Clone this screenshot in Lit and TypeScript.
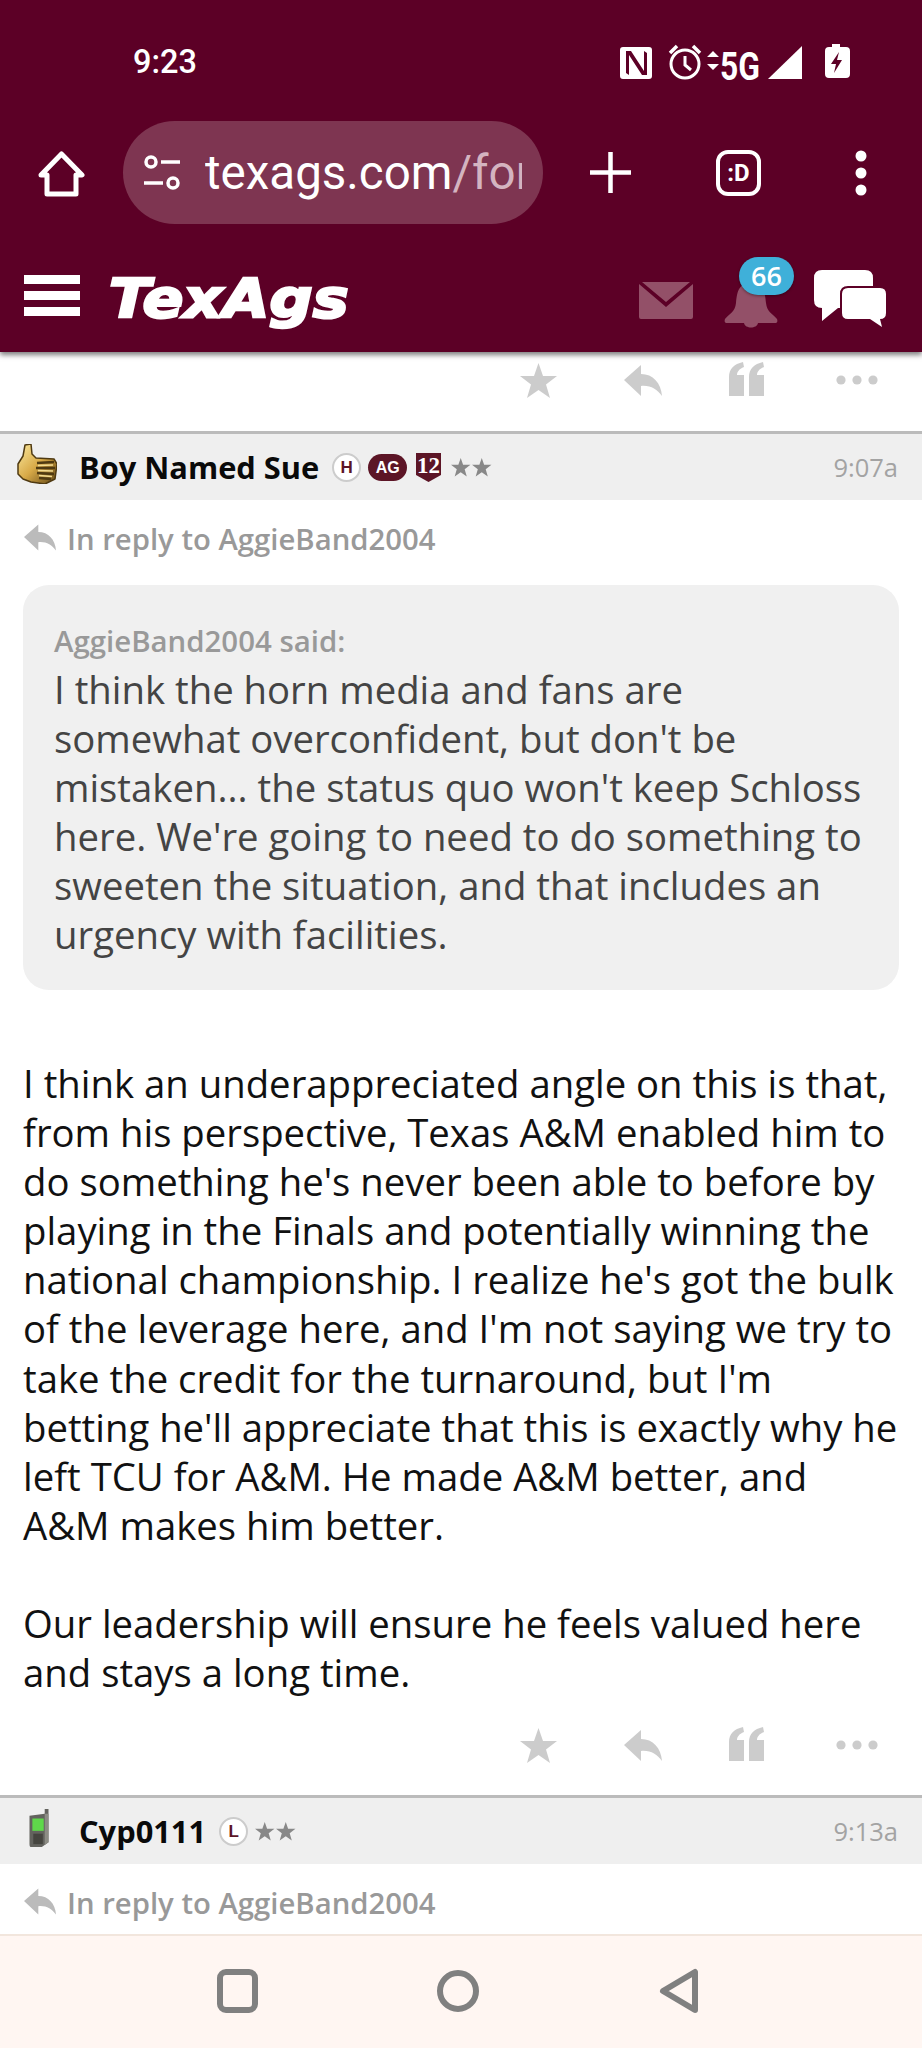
import { LitElement, html, css, svg } from "lit";
import { customElement } from "lit/decorators.js";

const star = svg`<polygon points="18.5,0 23,13 37,13 26,21.5 30,35 18.5,27 7,35 11,21.5 0,13 14,13"/>`;
const replyPath = svg`<path d="M17 0 L0 15 L17 31 L17 21 C26 20 33 24 38 31 C37 18 29 9 17 9 Z"/>`;

function actions() {
  return html`<div class="actions">
    <svg class="a-star" viewBox="0 0 37 35">${star}</svg>
    <svg class="a-reply" viewBox="0 0 38 31">${replyPath}</svg>
    <svg class="a-quote" viewBox="0 0 35 34"><path d="M0 34 V15 C0 7 5 2 14 0 L15 5 C10 7 8 10 8 13 H15 V34 Z M20 34 V15 C20 7 25 2 34 0 L35 5 C30 7 28 10 28 13 H35 V34 Z"/></svg>
    <svg class="a-dots" viewBox="0 0 42 10"><circle cx="5" cy="5" r="4.6"/><circle cx="21" cy="5" r="4.6"/><circle cx="37" cy="5" r="4.6"/></svg>
  </div>`;
}

function replyRow() {
  return html`<div class="reply-row">
    <svg viewBox="0 0 38 31">${replyPath}</svg><span>In reply to AggieBand2004</span>
  </div>`;
}

const stars = html`<svg class="stars" viewBox="0 0 39 18"><g transform="scale(.5)">${star}</g><g transform="translate(20 0) scale(.5)">${star}</g></svg>`;

const thumb = html`<svg class="av-thumb" viewBox="0 0 40 40">
  <defs>
    <linearGradient id="g" x1="0" y1="0" x2="1" y2="1"><stop offset="0" stop-color="#fbeaa0"/><stop offset=".5" stop-color="#d8aa48"/><stop offset="1" stop-color="#5e4312"/></linearGradient>
  </defs>
  <path d="M8 1 L14 0 L15 10 L19 14 L37 15 L40 20 L38 35 L28 40 L14 38 L6 35 L1 30 L1 20 L6 12 Z" fill="url(#g)" stroke="#4f3a12" stroke-width="1.5" stroke-linejoin="round"/>
  <path d="M20 19 L37 18 M19 24 L38 24 M20 29 L37 30 M22 34 L34 35" stroke="#4f3a12" stroke-width="2.6" fill="none"/>
  <path d="M21 21.5 L36 21 M21 26.5 L36 27 M22 31.5 L35 32.5" stroke="#f3dc92" stroke-width="1.5" fill="none"/>
</svg>`;

const phone = html`<svg class="av-phone" viewBox="0 0 22 40">
  <path d="M1 7 L17 5 V0 H21 V35 L14 40 H3 Q1 40 1 37 Z" fill="#63635e"/>
  <rect x="4" y="10" width="12" height="13" fill="#5fd84a"/>
  <rect x="5" y="26" width="10" height="11" fill="#45453f"/>
  <path d="M17 5 H21 V35 L17 38 Z" fill="#8c8c84"/>
</svg>`;

@customElement("app-root")
export class AppRoot extends LitElement {
  static styles = css`
    :host {
      display: flex;
      flex-direction: column;
      width: 922px;
      height: 2048px;
      overflow: hidden;
      background: #fff;
      font-family: "Open Sans", sans-serif;
    }
    .top {
      background: #5c0026;
      height: 352px;
      flex: none;
      box-shadow: 0 3px 5px rgba(0, 0, 0, 0.5);
      position: relative;
      z-index: 2;
      display: flex;
      flex-direction: column;
    }
    .status {
      height: 121px;
      flex: none;
      display: flex;
      align-items: flex-start;
      color: #fff;
      font-family: Roboto, sans-serif;
    }
    .time {
      margin: 44px 0 0 133px;
      font-size: 32.5px;
      line-height: 36px;
      font-weight: 500;
    }
    .status-icons {
      margin-left: auto;
      margin-right: 72px;
      margin-top: 44px;
      display: flex;
      align-items: flex-start;
      width: 230px;
      height: 38px;
    }
    .status-icons svg {
      width: 230px;
      height: 38px;
      fill: #fff;
      overflow: visible;
    }
    .five-g {
      font-size: 38px;
    }
    .toolbar {
      height: 103px;
      flex: none;
      display: flex;
      align-items: center;
    }
    .home {
      width: 47px;
      height: 46px;
      margin: 3px 0 0 38px;
      flex: none;
    }
    .pill {
      margin-left: 38px;
      width: 420px;
      height: 103px;
      border-radius: 52px;
      background: #7e3551;
      display: flex;
      align-items: center;
      flex: none;
      color: #fff;
      font-family: Roboto, sans-serif;
      font-size: 47.5px;
    }
    .tune {
      width: 37px;
      height: 36px;
      margin-left: 21px;
      flex: none;
    }
    .url {
      margin-left: 24px;
      width: 317px;
      white-space: nowrap;
      overflow: hidden;
    }
    .url i {
      font-style: normal;
      color: #d4b4c0;
    }
    .plus {
      width: 41px;
      height: 41px;
      margin-left: 47px;
      flex: none;
    }
    .tabs {
      width: 45px;
      height: 46px;
      margin-left: 85px;
      flex: none;
      border: 4px solid #fff;
      box-sizing: border-box;
      border-radius: 12px;
      color: #fff;
      font: 700 24px/38px Roboto, sans-serif;
      text-align: center;
    }
    .more {
      width: 12px;
      height: 46px;
      margin-left: 94px;
      flex: none;
    }
    .nav {
      flex: 1;
      position: relative;
      display: flex;
      align-items: flex-start;
      padding-top: 31px;
    }
    .burger {
      width: 56px;
      margin: 20px 0 0 24px;
      display: flex;
      flex-direction: column;
      gap: 7px;
      flex: none;
    }
    .burger b {
      display: block;
      height: 9px;
      background: #fff;
    }
    .logo {
      margin: 14px 0 0 29px;
      color: #fff;
      font: italic 700 54px/60px "DejaVu Sans", sans-serif;
      letter-spacing: 0.2px;
      -webkit-text-stroke: 2.5px #fff;
      transform: scaleX(1.115);
      transform-origin: left center;
    }
    .nav-icons {
      margin-left: auto;
      margin-right: 35px;
      display: flex;
      align-items: flex-start;
      position: relative;
    }
    .mail {
      width: 54px;
      height: 37px;
      margin-top: 27px;
    }
    .bell {
      width: 54px;
      height: 46px;
      margin: 28px 0 0 31px;
    }
    .badge {
      position: absolute;
      left: 100px;
      top: 2px;
      width: 55px;
      height: 38px;
      border-radius: 19px;
      background: #3fb0d9;
      color: #fff;
      font: 600 27px/37px "Open Sans", sans-serif;
      text-align: center;
      box-shadow: 0 1px 3px rgba(0, 0, 0, 0.4);
    }
    .chat {
      width: 73px;
      height: 58px;
      margin: 15px 0 0 36px;
    }
    .content {
      flex: 1;
      min-height: 0;
      overflow: hidden;
    }
    .actions {
      height: 79px;
      display: flex;
      align-items: flex-start;
      position: relative;
    }
    .actions svg {
      fill: #ccc;
      position: absolute;
    }
    .a-star {
      left: 520px;
      top: 11px;
      width: 37px;
      height: 35px;
    }
    .a-reply {
      left: 624px;
      top: 13px;
      width: 38px;
      height: 31px;
    }
    .a-quote {
      left: 729px;
      top: 10px;
      width: 35px;
      height: 34px;
    }
    .a-dots {
      left: 836px;
      top: 23px;
      width: 42px;
      height: 10px;
    }
    .head {
      border-top: 3px solid #bbb;
      background: #efefef;
      height: 66px;
      display: flex;
      align-items: center;
      position: relative;
    }
    .av {
      width: 79px;
      flex: none;
      display: flex;
      justify-content: center;
      padding-right: 6px;
      box-sizing: border-box;
    }
    .av-thumb {
      width: 40px;
      height: 40px;
      margin-top: -6px;
    }
    .av-phone {
      width: 22px;
      height: 38px;
      margin: -6px 0 0 4px;
      filter: blur(0.6px);
    }
    .name {
      font-size: 30.8px;
      font-weight: 700;
      color: #0a0a0a;
      white-space: nowrap;
      margin-right: 13px;
    }
    .circle {
      width: 29px;
      height: 29px;
      box-sizing: border-box;
      border: 2px solid #ccc;
      border-radius: 50%;
      background: #fff;
      color: #5c1526;
      font: 700 17px/25px "Liberation Sans", sans-serif;
      text-align: center;
      flex: none;
      margin-right: 7px;
    }
    .ag {
      width: 39px;
      height: 27px;
      border-radius: 14px;
      background: #5c1526;
      color: #fff;
      font: 700 16px/27px "Liberation Sans", sans-serif;
      text-align: center;
      margin-right: 9px;
      flex: none;
    }
    .shield {
      width: 25px;
      height: 29px;
      margin-right: 10px;
      flex: none;
    }
    .stars {
      width: 41px;
      height: 19px;
      fill: #888;
      flex: none;
    }
    .when {
      margin-left: auto;
      margin-right: 24px;
      font-size: 25.5px;
      color: #a3a3a3;
    }
    .reply-row {
      display: flex;
      align-items: center;
      box-sizing: border-box;
      height: 85px;
      padding: 0 0 8px 24px;
      font-size: 29.3px;
      font-weight: 600;
      color: #999;
    }
    .reply-row svg {
      width: 32px;
      height: 29px;
      fill: #bbb;
      margin-right: 11px;
      margin-top: -2px;
    }
    .quote {
      margin: 0 23px;
      padding: 33px 20px 30px 31px;
      background: #f0f0f0;
      border-radius: 26px;
      height: 405px;
      box-sizing: border-box;
    }
    .said {
      font-size: 29.4px;
      font-weight: 600;
      line-height: 47px;
      color: #999;
    }
    .quote p {
      margin: 0;
      font-size: 38.3px;
      line-height: 49.1px;
      color: #444;
      white-space: nowrap;
    }
    .body {
      margin: 69px 23px 0;
      font-size: 38.3px;
      line-height: 49.1px;
      color: #111;
      white-space: nowrap;
    }
    .body p {
      margin: 0 0 49.1px;
    }
    .body p:last-child {
      margin: 0;
    }
    .bottom-actions {
      margin-top: 20px;
      height: 78px;
    }
    .bottom-nav {
      height: 112px;
      flex: none;
      background: #fff6f2;
      border-top: 2px solid #f2e6dd;
    }
    .bottom-nav svg {
      display: block;
      width: 922px;
      height: 112px;
    }
  `;

  render() {
    return html`
      <div class="top">
        <div class="status">
          <div class="time">9:23</div>
          <div class="status-icons">
            <svg viewBox="0 0 230 38">
              <path fill-rule="evenodd" d="M3 3 H29 Q32 3 32 6 V32 Q32 35 29 35 H3 Q0 35 0 32 V6 Q0 3 3 3 Z M6 7 V29 L9 31 V11 L22 31 H27 V9 L24 7 V27 L11 7 Z"/>
              <g transform="translate(48 0)" fill="none" stroke="#fff" stroke-width="3">
                <circle cx="17" cy="20" r="14"/><path d="M17 12 V21 L23 26"/><path d="M2 9 L9 2 M32 9 L25 2" stroke-width="3.5"/>
              </g>
              <path d="M93 7 L99 13 H87 Z M93 26 L99 20 H87 Z"/>
              <text class="five-g" x="100" y="36" fill="#fff" font-family="Roboto, sans-serif" font-weight="700" textLength="40" lengthAdjust="spacingAndGlyphs">5G</text>
              <path d="M148 35 L182 2 V35 Z"/>
              <path fill-rule="evenodd" d="M212 0 H220 V3 H226 Q230 3 230 7 V30 Q230 34 226 34 H209 Q205 34 205 30 V7 Q205 3 209 3 H212 Z M219 8 L211 20 H216 L214 29 L222 16 H217 Z"/>
            </svg>
          </div>
        </div>
        <div class="toolbar">
          <svg class="home" viewBox="0 0 47 46" fill="none" stroke="#fff" stroke-width="5" stroke-linejoin="round">
            <path d="M23.5 3 L44 24 H38 V43 H9 V24 H3 Z"/>
          </svg>
          <div class="pill">
            <svg class="tune" viewBox="0 0 37 36" fill="none" stroke="#fff" stroke-width="3.5">
              <circle cx="7" cy="7" r="5"/><path d="M17 7 H36 M0 28 H19"/><circle cx="29" cy="28" r="5"/>
            </svg>
            <div class="url">texags.com<i>/for</i></div>
          </div>
          <svg class="plus" viewBox="0 0 41 41" stroke="#fff" stroke-width="4.5"><path d="M20.5 0 V41 M0 20.5 H41"/></svg>
          <div class="tabs">:D</div>
          <svg class="more" viewBox="0 0 12 46" fill="#fff"><circle cx="6" cy="6" r="5.5"/><circle cx="6" cy="23" r="5.5"/><circle cx="6" cy="40" r="5.5"/></svg>
        </div>
        <div class="nav">
          <div class="burger"><b></b><b></b><b></b></div>
          <div class="logo">TexAgs</div>
          <div class="nav-icons">
            <svg class="mail" viewBox="0 0 54 37" fill="#935068">
              <path d="M0 2 L27 25 L54 2 V35 Q54 37 52 37 H2 Q0 37 0 35 Z M3 0 H51 L27 20 Z"/>
            </svg>
            <svg class="bell" viewBox="0 0 54 46" fill="#935068">
              <path d="M27 0 C14 0 13 10 12 20 C11 29 6 30 1 36 C0 39 1 40 4 40 H50 C53 40 54 39 53 36 C48 30 43 29 42 20 C41 10 40 0 27 0 Z M20 40 H34 C33 46 21 46 20 40 Z"/>
            </svg>
            <div class="badge">66</div>
            <svg class="chat" viewBox="0 0 73 58">
              <path fill="#fff" d="M8 0 H51 Q59 0 59 8 V30 Q59 38 51 38 H24 L8 51 L8 38 Q0 38 0 30 V8 Q0 0 8 0 Z"/>
              <path fill="#fff" stroke="#5c0026" stroke-width="4" paint-order="stroke" d="M34 18 H66 Q72 18 72 24 V43 Q72 49 66 49 L68 57 L56 49 H34 Q28 49 28 43 V24 Q28 18 34 18 Z"/>
            </svg>
          </div>
        </div>
      </div>
      <div class="content">
        ${actions()}
        <div class="head">
          <div class="av">${thumb}</div>
          <div class="name">Boy Named Sue</div>
          <div class="circle">H</div>
          <div class="ag">AG</div>
          <svg class="shield" viewBox="0 0 25 29">
            <path fill="#5c1526" d="M0 0 H25 V22 L12.5 29 L0 22 Z"/>
            <text x="12.5" y="20" fill="#fff" font-size="23" font-weight="700" font-family="Liberation Serif, serif" text-anchor="middle">12</text>
          </svg>
          ${stars}
          <div class="when">9:07a</div>
        </div>
        ${replyRow()}
        <div class="quote">
          <div class="said">AggieBand2004 said:</div>
          <p>I think the horn media and fans are<br />somewhat overconfident, but don't be<br />mistaken... the status quo won't keep Schloss<br />here. We're going to need to do something to<br />sweeten the situation, and that includes an<br />urgency with facilities.</p>
        </div>
        <div class="body">
          <p>I think an underappreciated angle on this is that,<br />from his perspective, Texas A&amp;M enabled him to<br />do something he's never been able to before by<br />playing in the Finals and potentially winning the<br />national championship. I realize he's got the bulk<br />of the leverage here, and I'm not saying we try to<br />take the credit for the turnaround, but I'm<br />betting he'll appreciate that this is exactly why he<br />left TCU for A&amp;M. He made A&amp;M better, and<br />A&amp;M makes him better.</p>
          <p>Our leadership will ensure he feels valued here<br />and stays a long time.</p>
        </div>
        <div class="bottom-actions">${actions()}</div>
        <div class="head">
          <div class="av">${phone}</div>
          <div class="name">Cyp0111</div>
          <div class="circle">L</div>
          ${stars}
          <div class="when">9:13a</div>
        </div>
        ${replyRow()}
      </div>
      <div class="bottom-nav">
        <svg viewBox="0 0 922 112" fill="none" stroke="#808080" stroke-width="6" stroke-linejoin="round">
          <rect x="220" y="36" width="35" height="38" rx="6"/>
          <circle cx="458" cy="55" r="18" />
          <path d="M695 36 V74 L663 55 Z"/>
        </svg>
      </div>
    `;
  }
}
